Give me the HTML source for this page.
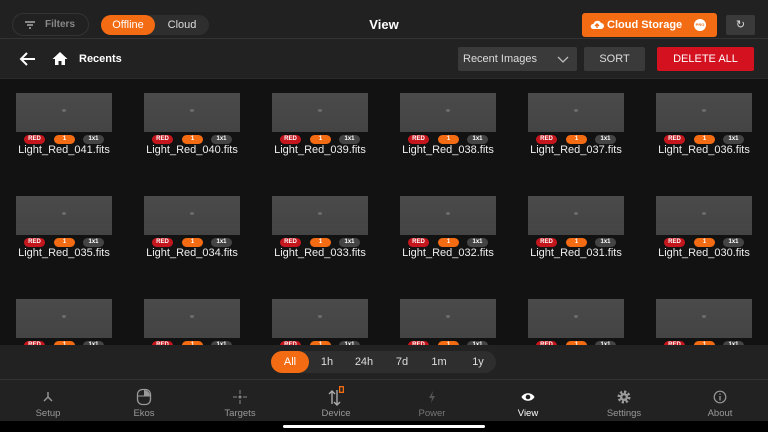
<!DOCTYPE html><html><head><style>
*{margin:0;padding:0;box-sizing:border-box}
body{width:768px;height:432px;background:#121212;font-family:"Liberation Sans",sans-serif;color:#fff;position:relative;overflow:hidden}
.a{position:absolute}
.top{left:0;top:0;width:768px;height:39px;background:#212121;border-bottom:1px solid #333}
.bar2{left:0;top:39px;width:768px;height:40px;background:#222;border-bottom:1px solid #2c2c2c}
.cell{position:absolute;width:96px}
.th{width:96px;height:39px;background:linear-gradient(#4a4a4a,#444);position:relative}
.th:after{content:"";position:absolute;left:46px;top:16px;width:4px;height:3px;border-radius:2px;background:#6a6a6a}
.bd{position:absolute;top:42px;height:9px;border-radius:5px;font-size:6px;font-weight:bold;text-align:center;line-height:9px}
.nm{position:absolute;top:51px;left:-20px;width:136px;text-align:center;font-size:11px;line-height:13px;color:#eee}
.nav{left:0;top:379px;width:768px;height:42px;background:#222;border-top:1px solid #333}
.ni{position:absolute;top:0;width:96px;text-align:center;font-size:9.5px;color:#999}
.ni .ic{height:22px;margin-top:6px;display:flex;justify-content:center;align-items:center}
.f{position:absolute;top:351px;width:34px;text-align:center;font-size:11px;line-height:22px;color:#ddd}
</style></head><body>
<div class="a top"></div>
<div class="a" style="left:12px;top:13px;width:77px;height:23px;border:1px solid #333;border-radius:12px;font-size:10px;color:#888;line-height:21px;padding-left:32px;font-weight:bold">Filters</div>
<div class="a" style="left:25px;top:21px;width:10px;height:1.5px;background:#888"></div>
<div class="a" style="left:27px;top:24px;width:6px;height:1.5px;background:#888"></div>
<div class="a" style="left:29px;top:27px;width:2px;height:1.5px;background:#888"></div>
<div class="a" style="left:101px;top:15px;width:108px;height:20px;background:#2e2e2e;border-radius:10px"></div>
<div class="a" style="left:101px;top:15px;width:54px;height:20px;background:#f36b12;border-radius:10px;font-size:11px;text-align:center;line-height:20px">Offline</div>
<div class="a" style="left:155px;top:15px;width:54px;height:20px;font-size:11px;text-align:center;line-height:20px;color:#ddd">Cloud</div>
<div class="a" style="left:340px;top:17px;width:88px;text-align:center;font-size:13px;font-weight:bold">View</div>
<div class="a" style="left:582px;top:13px;width:135px;height:24px;background:#f36b12;border-radius:3px;font-size:11px;font-weight:bold;line-height:24px;padding-left:25px">Cloud Storage</div>
<svg class="a" style="left:590px;top:19px" width="14" height="12"><path d="M3 10h8a3 3 0 0 0 0-6 4 4 0 0 0-7.5 1A2.5 2.5 0 0 0 3 10z" fill="#fff"/><path d="M7 9V5M5 7l2-2 2 2" stroke="#f36b12" stroke-width="1.4" fill="none"/></svg>
<div class="a" style="left:694px;top:19px;width:12px;height:12px;border-radius:6px;background:#fff;color:#f36b12;font-size:4px;text-align:center;line-height:12px;font-weight:bold">PRO</div>
<div class="a" style="left:726px;top:15px;width:29px;height:20px;background:#3a3a3a;border-radius:2px;text-align:center;line-height:20px;font-size:11px;color:#ddd">&#x21bb;</div>
<div class="a bar2"></div>
<svg class="a" style="left:19px;top:52px" width="17" height="14"><path d="M16 7H2M8 1L2 7l6 6" stroke="#fff" stroke-width="2" fill="none"/></svg>
<svg class="a" style="left:52px;top:51px" width="16" height="15"><path d="M8 1L0.5 8h2.5v6h3.5v-4h3v4h3.5V8h2.5z" fill="#fff"/></svg>
<div class="a" style="left:79px;top:53px;font-size:11px;font-weight:bold">Recents</div>
<div class="a" style="left:458px;top:47px;width:119px;height:24px;background:#3a3a3a;border-radius:2px;font-size:11px;line-height:24px;padding-left:5px;color:#ddd">Recent Images</div>
<svg class="a" style="left:557px;top:56px" width="12" height="7"><path d="M1 1l5 5 5-5" stroke="#bbb" stroke-width="1.3" fill="none"/></svg>
<div class="a" style="left:584px;top:47px;width:61px;height:24px;background:#3a3a3a;border-radius:2px;font-size:11px;line-height:24px;text-align:center;color:#ddd">SORT</div>
<div class="a" style="left:657px;top:47px;width:97px;height:24px;background:#d3111f;border-radius:2px;font-size:11px;line-height:24px;text-align:center">DELETE ALL</div>
<div id="g"></div>
<div class="a" style="left:0;top:345px;width:768px;height:34px;background:#222"></div>
<div class="a" style="left:271px;top:351px;width:225px;height:22px;background:#2e2e2e;border-radius:11px"></div>
<div class="a" style="left:271px;top:351px;width:38px;height:22px;background:#f36b12;border-radius:11px;font-size:11px;text-align:center;line-height:22px">All</div>
<div class="f" style="left:310px">1h</div>
<div class="f" style="left:347px">24h</div>
<div class="f" style="left:385px">7d</div>
<div class="f" style="left:422px">1m</div>
<div class="f" style="left:461px">1y</div>
<div class="a nav">
<div class="ni" style="left:0"><div class="ic"><svg width="12" height="12"><path d="M6 1v5M6 6l-4 4M6 6l4 4" stroke="#999" stroke-width="1.4"/></svg></div>Setup</div>
<div class="ni" style="left:96px"><div class="ic"><svg width="16" height="18"><rect x="1.5" y="1.5" width="13" height="15" rx="5" fill="none" stroke="#999" stroke-width="1.3"/><path d="M2 8h12" stroke="#999"/><path d="M8 2a6 6 0 0 1 6 6H8z" fill="#999"/></svg></div>Ekos</div>
<div class="ni" style="left:192px"><div class="ic"><svg width="14" height="14"><circle cx="7" cy="7" r="1.5" fill="#888"/><path d="M7 0v4M7 10v4M0 7h4M10 7h4" stroke="#888"/></svg></div>Targets</div>
<div class="ni" style="left:288px"><div class="ic"><svg width="22" height="22"><path d="M7 18V5M4 8l3-3 3 3M12 4v15M9 16l3 3 3-3" stroke="#aaa" stroke-width="1.4" fill="none"/><rect x="14" y="0" width="5" height="7" fill="#f36b12"/><rect x="15.3" y="1.3" width="2.4" height="4.4" fill="#222"/></svg></div>Device</div>
<div class="ni" style="left:384px;color:#777"><div class="ic"><svg width="8" height="12"><path d="M5 0L1 7h3l-1 5 4-7H4z" fill="#555"/></svg></div>Power</div>
<div class="ni" style="left:480px;color:#fff"><div class="ic"><svg width="14" height="10"><path d="M0.5 5C3 0 11 0 13.5 5 11 10 3 10 0.5 5z" fill="#fff"/><circle cx="7" cy="5" r="2.3" fill="#222"/></svg></div>View</div>
<div class="ni" style="left:576px"><div class="ic"><svg width="14" height="14"><circle cx="7" cy="7" r="5" fill="none" stroke="#999" stroke-width="3" stroke-dasharray="2.2 1.7"/><circle cx="7" cy="7" r="4" fill="#999"/><circle cx="7" cy="7" r="1.6" fill="#222"/></svg></div>Settings</div>
<div class="ni" style="left:672px"><div class="ic"><svg width="14" height="14"><circle cx="7" cy="7" r="5.8" fill="none" stroke="#999" stroke-width="1.2"/><path d="M7 6v4.5M7 3.5v1.3" stroke="#999" stroke-width="1.3"/></svg></div>About</div>
</div>
<div class="a" style="left:0;top:421px;width:768px;height:11px;background:#000"></div>
<div class="a" style="left:283px;top:425px;width:202px;height:3px;background:#fff;border-radius:2px"></div>
<script>
var h='',n=41;
for(var r=0;r<3;r++)for(var c=0;c<6;c++){var x=16+c*128,y=93+r*103,s=('0'+n).slice(-2);n--;
h+='<div class="cell" style="left:'+x+'px;top:'+y+'px"><div class="th"></div>'+
'<div class="bd" style="left:8px;width:21px;background:#c4161c">RED</div>'+
'<div class="bd" style="left:38px;width:21px;background:#f36b12">1</div>'+
'<div class="bd" style="left:67px;width:21px;background:#444">1x1</div>'+
'<div class="nm">Light_Red_0'+s+'.fits</div></div>';}
document.getElementById('g').innerHTML=h;
</script>
</body></html>
